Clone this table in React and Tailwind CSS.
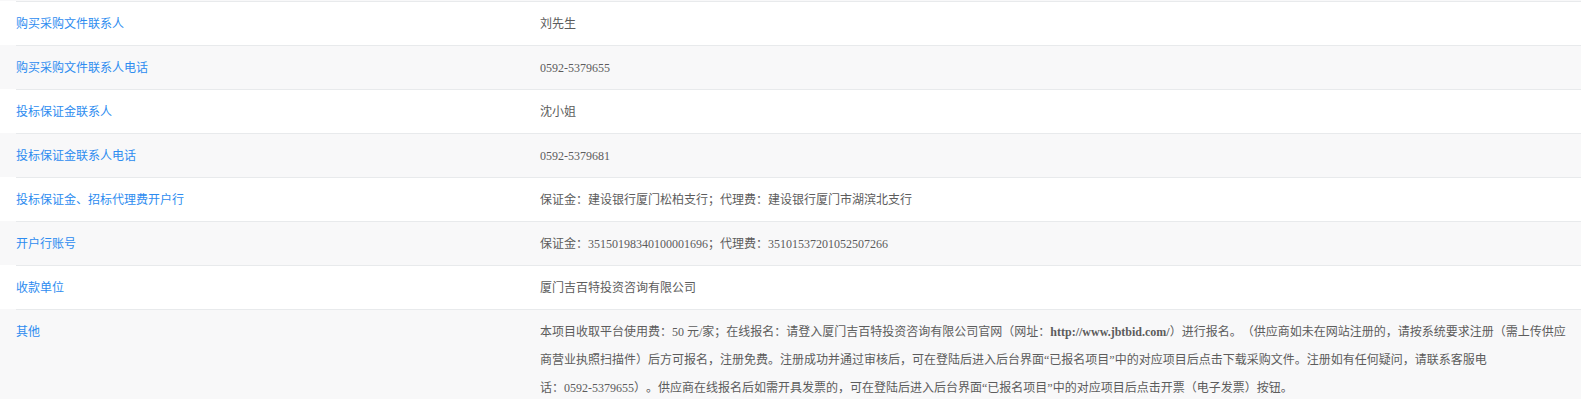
export default function App() {
    const rows = [
        { label: '购买采购文件联系人', value: '刘先生' },
        { label: '购买采购文件联系人电话', value: '0592-5379655' },
        { label: '投标保证金联系人', value: '沈小姐' },
        { label: '投标保证金联系人电话', value: '0592-5379681' },
        { label: '投标保证金、招标代理费开户行', value: '保证金：建设银行厦门松柏支行；代理费：建设银行厦门市湖滨北支行' },
        { label: '开户行账号', value: '保证金：35150198340100001696；代理费：35101537201052507266' },
        { label: '收款单位', value: '厦门吉百特投资咨询有限公司' },
    ];

    return (
        <div
            className="min-h-screen bg-white text-[12px] [text-spacing-trim:space-all]"
            style={{ fontFamily: '"Liberation Serif", "Noto Sans CJK SC", serif' }}
        >
            <div className="h-px bg-[#f8f8f9]" />
            {rows.map((row, i) => (
                <div key={row.label} className={i % 2 === 0 ? 'bg-white' : 'bg-[#f8f8f9]'}>
                    <div className="ml-4 flex border-t border-[#e8eaec] pt-[8px] pb-[7px] leading-[28px]">
                        <div className="w-[524px] shrink-0 text-[#2d8cf0]">{row.label}</div>
                        <div className="flex-1 text-[#5c5c5c]">{row.value}</div>
                    </div>
                </div>
            ))}

            {/* 其他 */}
            <div className="bg-[#f8f8f9]">
                <div className="ml-4 flex border-t border-[#e8eaec] pt-[8px] pb-[12px] leading-[28px]">
                    <div className="w-[524px] shrink-0 text-[#2d8cf0]">其他</div>
                    <div className="flex-1 text-[#5c5c5c]">
                        <div className="whitespace-nowrap">
                            本项目收取平台使用费：50 元/家；在线报名：请登入厦门吉百特投资咨询有限公司官网（网址：
                            <span className="font-semibold">http://www.jbtbid.com/</span>
                            ）进行报名。（供应商如未在网站注册的，请按系统要求注册（需上传供应
                        </div>
                        <div className="whitespace-nowrap">
                            商营业执照扫描件）后方可报名，注册免费。注册成功并通过审核后，可在登陆后进入后台界面“已报名项目”中的对应项目后点击下载采购文件。注册如有任何疑问，请联系客服电
                        </div>
                        <div className="whitespace-nowrap">
                            话：0592-5379655）。供应商在线报名后如需开具发票的，可在登陆后进入后台界面“已报名项目”中的对应项目后点击开票（电子发票）按钮。
                        </div>
                    </div>
                </div>
            </div>
        </div>
    );
}
